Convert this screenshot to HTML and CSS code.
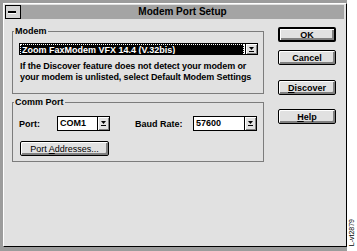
FILE: index.html
```html
<!DOCTYPE html>
<html lang="en">
<head>
  <meta charset="UTF-8">
  <title>Modem Port Setup</title>
  <link rel="stylesheet" href="styles.css">
</head>
<body>
  <div class="screen">
    <div class="dialog">
      <div class="titlebar">
        <div class="sysmenu"><span class="bar"></span></div>
        <div class="title">Modem Port Setup</div>
      </div>

      <div class="content">
        <div class="groups">
          <fieldset class="group modem">
            <legend>Modem</legend>
            <div class="combo modem-list">
              <span class="value selected"><span class="focus">Zoom FaxModem VFX 14.4 (V.32bis)</span></span>
              <span class="arrow"><svg width="7" height="7" viewBox="0 0 7 7"><polygon points="1,1 6,1 3.5,4" fill="#000"/><rect x="1" y="5" width="5" height="1" fill="#000"/></svg></span>
            </div>
            <p class="hint">If the Discover feature does not detect your modem or<br>your modem is unlisted, select Default Modem Settings</p>
          </fieldset>

          <fieldset class="group comm">
            <legend>Comm Port</legend>
            <div class="row">
              <label class="lbl port-lbl">Port:</label>
              <div class="combo port">
                <span class="value">COM1</span>
                <span class="arrow"><svg width="7" height="7" viewBox="0 0 7 7"><polygon points="1,1 6,1 3.5,4" fill="#000"/><rect x="1" y="5" width="5" height="1" fill="#000"/></svg></span>
              </div>
              <label class="lbl baud-lbl">Baud Rate:</label>
              <div class="combo baud">
                <span class="value">57600</span>
                <span class="arrow"><svg width="7" height="7" viewBox="0 0 7 7"><polygon points="1,1 6,1 3.5,4" fill="#000"/><rect x="1" y="5" width="5" height="1" fill="#000"/></svg></span>
              </div>
            </div>
            <button class="btn addr">Port <u>A</u>ddresses...</button>
          </fieldset>
        </div>

        <div class="buttons">
          <button class="btn default">OK</button>
          <button class="btn cancel">Cancel</button>
          <button class="btn discover"><u>D</u>iscover</button>
          <button class="btn help"><u>H</u>elp</button>
        </div>
      </div>
    </div>
    <div class="margin"><span class="figno">L-vt2879</span></div>
  </div>
</body>
</html>
```

FILE: styles.css
```css
body {
  margin: 0;
  background: #9c9c9c;
  font-family: "Liberation Sans", Arial, sans-serif;
  font-weight: bold;
  font-size: 9px;
  color: #000;
}
.screen {
  display: flex;
  height: 251px;
}
.dialog {
  margin: 3px 0 0 3px;
  width: 342px;
  height: 242px;
  border: 1px solid;
  border-color: #fff #000 #000 #fff;
  background: #e1e1e1;
  display: flex;
  flex-direction: column;
}
.titlebar {
  margin: 1px 2px 0 1px;
  height: 14px;
  display: flex;
  background: #a4a4a4;
}
.sysmenu {
  box-sizing: border-box;
  width: 16px;
  height: 14px;
  border: 1px solid #000;
  background: #d4d4d4;
  display: flex;
  align-items: center;
  padding-left: 2px;
}
.sysmenu .bar {
  width: 8px;
  height: 2px;
  background: #000;
  box-shadow: 0 1px #fff;
}
.title {
  flex: 1;
  text-align: center;
  font-size: 10px;
  line-height: 14px;
}
.content {
  display: flex;
  padding: 7px 0 0 8px;
}
.groups {
  width: 252px;
}
.group {
  box-sizing: border-box;
  width: 252px;
  margin: 0;
  border: 1px solid #7c7c7c;
  min-width: 0;
}
.group legend {
  margin-left: -5px;
  padding: 0 1px;
  line-height: 11px;
}
.modem {
  padding: 6px 5px 10px 6px;
}
.comm {
  margin-top: 3px;
  padding: 8px 5px 5px 6px;
}
.combo {
  box-sizing: border-box;
  display: flex;
  border: 1px solid #000;
  background: #fff;
}
.combo .value {
  flex: 1;
  padding-left: 2px;
  line-height: 13px;
  white-space: nowrap;
  overflow: hidden;
}
.combo .arrow {
  width: 11px;
  border-left: 1px solid #000;
  background: #e1e1e1;
  box-shadow: inset 1px 1px #fff, inset -1px -1px #808080;
  display: flex;
  align-items: center;
  justify-content: center;
}
.modem-list {
  width: 239px;
  height: 12px;
}
.modem-list .value {
  line-height: 10px;
  padding: 0;
}
.selected {
  background: #000;
  color: #fff;
  margin: 0 1px 0 0;
}
.selected .focus {
  display: block;
  border: 1px dotted #fff;
  padding-left: 1px;
}
.hint {
  margin: 6px 0 0 1px;
  line-height: 11px;
  letter-spacing: -0.1px;
  white-space: nowrap;
}
.row {
  display: flex;
  align-items: center;
}
.lbl {
  display: block;
}
.port-lbl {
  width: 38px;
}
.baud-lbl {
  width: 58px;
  margin-left: 25px;
}
.port, .baud {
  height: 15px;
}
.port {
  width: 53px;
}
.baud {
  width: 64px;
}
.btn {
  box-sizing: border-box;
  display: block;
  height: 15px;
  padding: 0;
  border: 1px solid #000;
  border-radius: 2px;
  background: #e1e1e1;
  box-shadow: inset 1px 1px #fff, inset -2px -2px #808080;
  font: inherit;
  color: #000;
  line-height: 12px;
}
.addr {
  width: 89px;
  margin: 10px 0 0 1px;
  font-weight: normal;
}
.buttons {
  width: 58px;
  margin-left: 14px;
  padding-top: 1px;
}
.buttons .btn {
  width: 58px;
}
.default {
  border-width: 2px;
}
.cancel {
  margin-top: 8px;
}
.discover {
  margin-top: 15px;
}
.help {
  margin-top: 14px;
}
.margin {
  flex: 1;
  background: #fff;
  display: flex;
  align-items: flex-end;
  justify-content: center;
  padding-bottom: 5px;
}
.figno {
  writing-mode: vertical-rl;
  transform: rotate(180deg);
  font-size: 7px;
  font-weight: normal;
  line-height: 8px;
}
```
